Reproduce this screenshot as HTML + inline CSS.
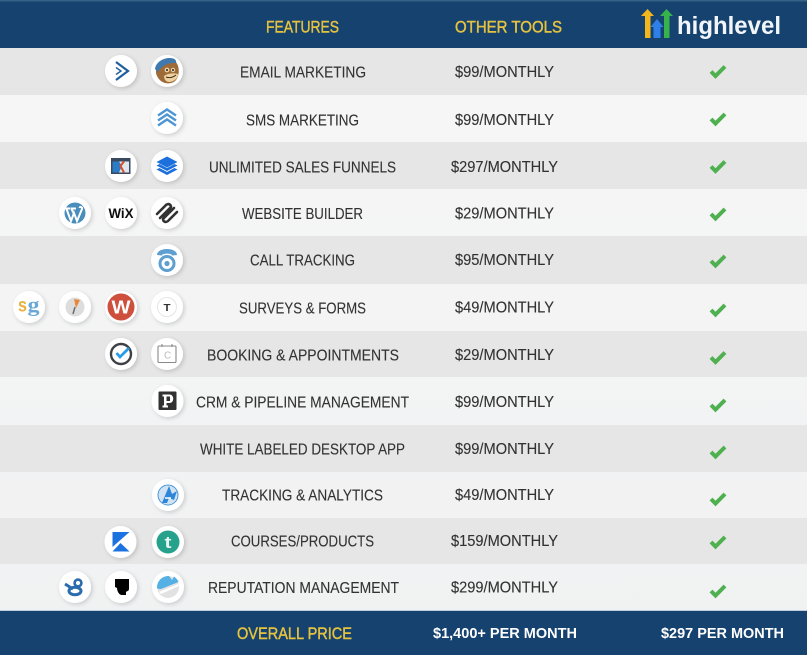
<!DOCTYPE html>
<html lang="en"><head><meta charset="utf-8"><title>Features comparison</title>
<style>
html,body{margin:0;padding:0;background:#e6e6e6;width:807px;height:655px;overflow:hidden}
svg{display:block}
text{font-family:"Liberation Sans",sans-serif}
.r{font-size:15.4px;fill:#333;stroke:#333;stroke-width:.12}
.h{font-size:17px;fill:#e6c33f;stroke:#e6c33f;stroke-width:.45}
.w{font-size:15px;fill:#fff;font-weight:bold}
</style></head><body>
<svg width="807" height="655" viewBox="0 0 807 655" xmlns="http://www.w3.org/2000/svg">
<defs>
<linearGradient id="lg" x1="0" y1="0" x2="0" y2="1"><stop offset="0" stop-color="#f7f7f7"/><stop offset="1" stop-color="#f0f1f2"/></linearGradient>
<filter id="s" x="-40%" y="-40%" width="190%" height="190%"><feDropShadow dx="1.5" dy="1.5" stdDeviation="2" flood-color="#000" flood-opacity=".16"/></filter>
<filter id="b" x="-10%" y="-10%" width="120%" height="120%"><feGaussianBlur stdDeviation=".35"/></filter>
<path id="ck" d="M-7 .5L-2.500 5L7-4.500" fill="none" stroke="#4fb04f" stroke-width="4"/>
<circle id="c" r="16" fill="#fff" filter="url(#s)"/>
</defs>
<rect width="807" height="655" fill="url(#lg)"/>
<rect width="807" height="48" fill="#15426f"/>
<rect width="807" height="1.5" fill="#356287"/>
<g fill="#e6e6e6">
<rect y="48" width="807" height="47"/><rect y="142" width="807" height="47"/><rect y="236" width="807" height="48"/><rect y="331" width="807" height="46"/><rect y="425" width="807" height="47"/><rect y="518" width="807" height="46"/>
</g>
<rect y="611" width="807" height="44" fill="#15426f"/>
<rect y="610" width="807" height="1" fill="#bcd0e2"/>

<g filter="url(#b)">
<text class="h" x="266" y="32.500" textLength="73" lengthAdjust="spacingAndGlyphs">FEATURES</text>
<text class="h" x="455" y="32.500" textLength="107" lengthAdjust="spacingAndGlyphs">OTHER TOOLS</text>
<text class="h" x="237" y="639" textLength="115" lengthAdjust="spacingAndGlyphs">OVERALL PRICE</text>
<text class="w" x="433" y="638" textLength="144" lengthAdjust="spacingAndGlyphs">$1,400+ PER MONTH</text>
<text class="w" x="661" y="638" textLength="123" lengthAdjust="spacingAndGlyphs">$297 PER MONTH</text>

<!-- logo -->
<path d="M641 16L647.500 9L654 16H650.500V38H645V16Z" fill="#f3b61f"/>
<path d="M650.500 27L657 19L663.500 27H660.500V38H653.500V27Z" fill="#2f80e8"/>
<path d="M660 16L666.500 9L673 16H669.500V38H664V16Z" fill="#37b24d"/>
<text x="677" y="34" font-size="25" font-weight="bold" fill="#f2f6fa" textLength="104" lengthAdjust="spacingAndGlyphs">highlevel</text>

<g>
<text class="r" x="240" y="77.500" textLength="126" lengthAdjust="spacingAndGlyphs">EMAIL MARKETING</text>
<text class="r" x="246" y="125.500" textLength="113" lengthAdjust="spacingAndGlyphs">SMS MARKETING</text>
<text class="r" x="209" y="172.500" textLength="187" lengthAdjust="spacingAndGlyphs">UNLIMITED SALES FUNNELS</text>
<text class="r" x="242" y="219" textLength="121" lengthAdjust="spacingAndGlyphs">WEBSITE BUILDER</text>
<text class="r" x="250" y="265.500" textLength="105" lengthAdjust="spacingAndGlyphs">CALL TRACKING</text>
<text class="r" x="239" y="313.500" textLength="127" lengthAdjust="spacingAndGlyphs">SURVEYS &amp; FORMS</text>
<text class="r" x="207" y="360.500" textLength="192" lengthAdjust="spacingAndGlyphs">BOOKING &amp; APPOINTMENTS</text>
<text class="r" x="196" y="407.500" textLength="213" lengthAdjust="spacingAndGlyphs">CRM &amp; PIPELINE MANAGEMENT</text>
<text class="r" x="200" y="454.500" textLength="205" lengthAdjust="spacingAndGlyphs">WHITE LABELED DESKTOP APP</text>
<text class="r" x="222" y="500.500" textLength="161" lengthAdjust="spacingAndGlyphs">TRACKING &amp; ANALYTICS</text>
<text class="r" x="231" y="546.500" textLength="143" lengthAdjust="spacingAndGlyphs">COURSES/PRODUCTS</text>
<text class="r" x="208" y="593" textLength="191" lengthAdjust="spacingAndGlyphs">REPUTATION MANAGEMENT</text>

<text class="r" x="455" y="77" textLength="99" lengthAdjust="spacingAndGlyphs">$99/MONTHLY</text>
<text class="r" x="455" y="125" textLength="99" lengthAdjust="spacingAndGlyphs">$99/MONTHLY</text>
<text class="r" x="451" y="172" textLength="107" lengthAdjust="spacingAndGlyphs">$297/MONTHLY</text>
<text class="r" x="455" y="218.500" textLength="99" lengthAdjust="spacingAndGlyphs">$29/MONTHLY</text>
<text class="r" x="455" y="265" textLength="99" lengthAdjust="spacingAndGlyphs">$95/MONTHLY</text>
<text class="r" x="455" y="312.500" textLength="99" lengthAdjust="spacingAndGlyphs">$49/MONTHLY</text>
<text class="r" x="455" y="360" textLength="99" lengthAdjust="spacingAndGlyphs">$29/MONTHLY</text>
<text class="r" x="455" y="407" textLength="99" lengthAdjust="spacingAndGlyphs">$99/MONTHLY</text>
<text class="r" x="455" y="454" textLength="99" lengthAdjust="spacingAndGlyphs">$99/MONTHLY</text>
<text class="r" x="455" y="500" textLength="99" lengthAdjust="spacingAndGlyphs">$49/MONTHLY</text>
<text class="r" x="451" y="546" textLength="107" lengthAdjust="spacingAndGlyphs">$159/MONTHLY</text>
<text class="r" x="451" y="592.500" textLength="107" lengthAdjust="spacingAndGlyphs">$299/MONTHLY</text>
</g>

<!-- checks -->
<use href="#ck" x="718" y="71"/><use href="#ck" x="718" y="118.500"/><use href="#ck" x="718" y="166"/><use href="#ck" x="718" y="213.500"/><use href="#ck" x="718" y="260.500"/><use href="#ck" x="718" y="309.500"/><use href="#ck" x="718" y="357"/><use href="#ck" x="718" y="404.500"/><use href="#ck" x="718" y="451.500"/><use href="#ck" x="718" y="498.500"/><use href="#ck" x="718" y="541.500"/><use href="#ck" x="718" y="590.500"/>

<!-- row 1: ActiveCampaign, Mailchimp -->
<g transform="translate(121,71)"><use href="#c"/><path d="M-5-9L7 0L-5 9" fill="none" stroke="#1f5f9e" stroke-width="2.200"/><path d="M-5-3.500L0 0L-5 3.500" fill="none" stroke="#1f5f9e" stroke-width="1.400"/></g>
<g transform="translate(167,71)"><use href="#c"/>
<path d="M-11 2C-12-8-3-13 4-12C11-10 13-2 11 5C9 12 3 13-2 12C-6 11-10 7-11 2Z" fill="#9d6a38"/>
<path d="M-12-2C-11-9-4-13 3-13C7-13 10-11 9-8C3-9-5-6-9 1Z" fill="#3f79ad"/>
<path d="M-3 5C1 2 7 2 11 3C11 8 6 11 2 11C-1 11-3 8-3 5Z" fill="#ecd2a2"/>
<circle cx="0" cy="-1" r="2.400" fill="#ecd2a2"/><circle cx="6" cy="-1" r="2.200" fill="#ecd2a2"/>
<circle cx="0" cy="-1" r="1" fill="#222"/><circle cx="6" cy="-1" r="1" fill="#222"/>
<path d="M-1 6Q4 8 9 4" fill="none" stroke="#4a2c14" stroke-width="1"/></g>

<!-- row 2 -->
<g transform="translate(167,118)"><use href="#c"/><g fill="none" stroke="#4d96d3" stroke-width="2.400"><path d="M-9-2.500L0-8.500L9-2.500"/><path d="M-9 2.500L0-3.500L9 2.500"/><path d="M-9 7.500L0 1.500L9 7.500"/></g></g>

<!-- row 3 -->
<g transform="translate(121,166)"><use href="#c"/><rect x="-10" y="-8" width="19.500" height="16" fill="#3b4a5e"/><rect x="-8.500" y="-4.500" width="16.500" height="11" fill="#dfe5ec"/><path d="M-8.500-4.500H-2L1 0L-2 6.500H-8.500Z" fill="#2b7bc5"/><path d="M3-4.500L-.5 0L3 6.500" fill="none" stroke="#d9502e" stroke-width="2"/></g>
<g transform="translate(167,166)"><use href="#c"/><path d="M0-9.500L10.500-4L0 1.500L-10.500-4Z" fill="#1c6fdc"/><path d="M-10.500-.5L-7.500-2L0 2L7.500-2L10.500-.5L0 5Z" fill="#1c6fdc"/><path d="M-10.500 3.500L-7.500 2L0 6L7.500 2L10.500 3.500L0 9Z" fill="#1c6fdc"/></g>

<!-- row 4 -->
<g transform="translate(75,213)"><use href="#c"/><circle r="10.500" fill="#4a8dbd"/><path d="M-8.500-4L-4 8L-1 0L2 8L7-4C7.500-6 5-7 4.500-5M-3.500-4L-1 1M-10-4.500H-5M-4.500-4.500H1" fill="none" stroke="#fff" stroke-width="2"/></g>
<g transform="translate(121,213)"><use href="#c"/><text x="-12.500" y="5" font-size="14" font-weight="bold" fill="#111" textLength="25" lengthAdjust="spacingAndGlyphs">WiX</text></g>
<g transform="translate(167,213)"><use href="#c"/><g fill="none" stroke="#333" stroke-width="2.600" stroke-linecap="round"><path d="M-10 1L-2-7C1-11 6-8 3-4L-2 1"/><path d="M-7 5L4-6"/><path d="M10-1L2 7C-1 11-6 8-3 4L2-1"/><path d="M7-5L-4 6"/></g></g>

<!-- row 5 -->
<g transform="translate(167,260)"><use href="#c"/><path d="M-10-5C-10-13 10-13 10-5L5-4.500C5-7-5-7-5-4.500Z" fill="#5c9fd0"/><circle cy="3.500" r="7" fill="none" stroke="#5c9fd0" stroke-width="3"/><circle cy="3.500" r="2.600" fill="#5c9fd0"/></g>

<!-- row 6 -->
<g transform="translate(29,307)"><use href="#c"/><text x="-11" y="4.500" font-size="19" font-weight="bold" fill="#e8b23c" textLength="9" lengthAdjust="spacingAndGlyphs">s</text><text x="-1.500" y="4.500" font-size="20" font-weight="bold" fill="#6aa9d6" textLength="12" lengthAdjust="spacingAndGlyphs" style="font-family:'Liberation Serif',serif">g</text></g>
<g transform="translate(75,307)"><use href="#c"/><circle r="9.500" fill="#ddd"/><path d="M-1-8L5-7L1 1Z" fill="#e8863a"/><path d="M0 0L-2 7" stroke="#666" stroke-width="1.400"/></g>
<g transform="translate(121,307)"><use href="#c"/><circle r="13.500" fill="#cf4f3e"/><text x="-9.500" y="6.500" font-size="18" font-weight="bold" fill="#fff" textLength="19" lengthAdjust="spacingAndGlyphs">W</text></g>
<g transform="translate(167,307)"><use href="#c"/><circle r="9.500" fill="#fff" stroke="#e6e6e6"/><text x="-3.500" y="4" font-size="10" font-weight="bold" fill="#333" textLength="7" lengthAdjust="spacingAndGlyphs">T</text></g>

<!-- row 7 -->
<g transform="translate(121,354)"><use href="#c"/><circle r="10" fill="none" stroke="#3c3f44" stroke-width="2.400"/><path d="M-4.500-1L-1 3L8-6" fill="none" stroke="#2b9be6" stroke-width="2.800"/></g>
<g transform="translate(167,354)"><use href="#c"/><rect x="-9" y="-8" width="18" height="16.500" rx="1" fill="#fff" stroke="#8a8a8a" stroke-width="1.100"/><path d="M-5-10V-7M5-10V-7" stroke="#8a8a8a" stroke-width="1.100"/><text x="-3" y="4.500" font-size="10" fill="#bbb">C</text></g>

<!-- row 8 -->
<g transform="translate(167.500,401)"><use href="#c"/><rect x="-9" y="-9.500" width="18" height="18.500" rx="1" fill="#333"/><path d="M-5-6.500H2C7-6.500 7 2 2 2H-1V4.500H.5V6.500H-5V4.500H-3.500V-4.500H-5Z" fill="#fff"/><rect x="-1" y="-4.500" width="3.500" height="4.500" fill="#333"/></g>

<!-- row 10 -->
<g transform="translate(168,495)"><use href="#c"/><circle r="10" fill="#cfe3f5" stroke="#4d96d3" stroke-width="1"/><path d="M-6 8L1-9L4-1L9-4L6 5L1 3L-1 8Z" fill="#2f86d8"/><path d="M-3 3H3" stroke="#fff" stroke-width="1.500"/></g>

<!-- row 11 -->
<g transform="translate(120.500,542)"><use href="#c"/><path d="M-8-10H9L-8 5Z" fill="#1a73e0"/><path d="M-8 9.500L0 1L9 9.500Z" fill="#1a73e0"/></g>
<g transform="translate(168,542)"><use href="#c"/><circle r="11.500" fill="#25a18c"/><text x="-3.500" y="6" font-size="17" font-weight="bold" fill="#e8f5f2" textLength="7" lengthAdjust="spacingAndGlyphs">t</text></g>

<!-- row 12 -->
<g transform="translate(75,587)"><use href="#c"/><g fill="none" stroke="#2b6cae"><circle cx="3" cy="-4" r="3.400" stroke-width="2.600"/><ellipse cx="0" cy="4" rx="6" ry="3.800" stroke-width="3"/><path d="M-10-3L-2 2" stroke-width="3"/></g></g>
<g transform="translate(121,587)"><use href="#c"/><path d="M-6-8H8V2C8 4 6 4 5 5V8H1C-2 8-4 4-4 1L-6 0Z" fill="#050505"/></g>
<g transform="translate(168,587)"><use href="#c"/><circle r="11" fill="#e2e2e2"/><path d="M-11 1C-11-6-6-11 1-11L4-7L6-10.500C8-9 10-7 10.500-5L-7 2C-9 2-10 2-11 1Z" fill="#55b0e6"/><path d="M-9 5L10-3L11-1L-7 7Z" fill="#fff"/></g>
</g>
</svg>
</body></html>
